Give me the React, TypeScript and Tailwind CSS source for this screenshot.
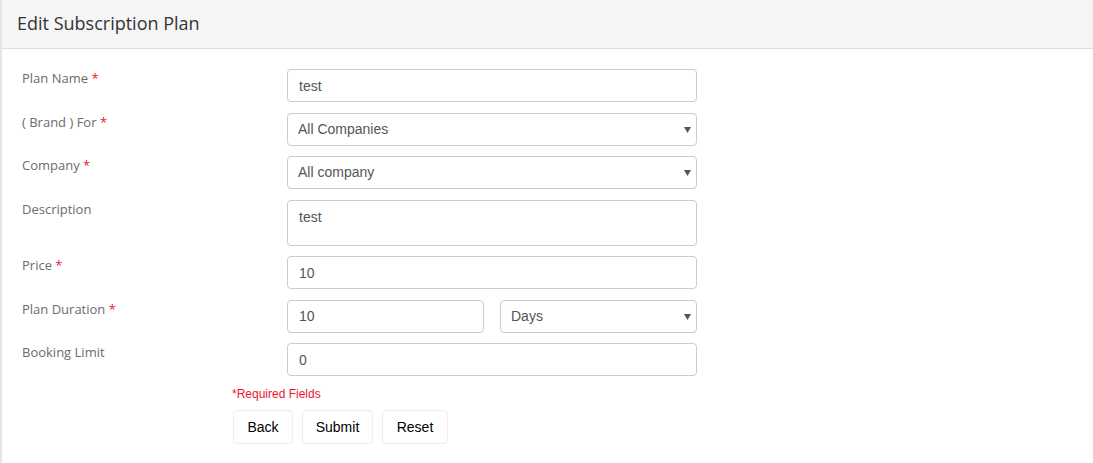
import React from "react";

const labelFont = { fontFamily: '"Open Sans", "Noto Sans", sans-serif' };

const Label = ({ text, required }: { text: string; required?: boolean }) => (
  <div className="text-[13px] leading-[18px] text-[#6b6b6b]" style={labelFont}>
    {text}
    {required && <span className="text-[#f0142f]"> *</span>}
  </div>
);

const inputCls =
  "w-full h-[33px] px-[11px] border border-[#ccc] rounded-[4px] bg-white text-[14px] text-[#555] outline-none font-['Liberation_Sans',Arial,sans-serif]";

const Select = ({ value, options }: { value: string; options: string[] }) => (
  <div className="relative w-full">
    <select defaultValue={value} className={inputCls + " appearance-none pl-[10px]"}>
      {options.map((o) => (
        <option key={o}>{o}</option>
      ))}
    </select>
    <svg
      className="absolute right-[6px] top-[14px] pointer-events-none"
      width="7"
      height="6"
      viewBox="0 0 7 6"
    >
      <path d="M0 0 H7 L3.5 6 Z" fill="#555" />
    </svg>
  </div>
);

export default function App() {
  return (
    <div className="w-[1093px] h-[463px] bg-white border-l-2 border-[#e6e6e6]">
      <div className="h-[49px] bg-[#f5f5f5] border-b border-[#ddd] flex items-center px-[15px]">
        <h1 className="text-[18px] text-[#333] pb-[2px]" style={labelFont}>
          Edit Subscription Plan
        </h1>
      </div>

      <form className="pt-[20px] pl-[20px]">
        <div className="grid grid-cols-[265px_410px] gap-y-[10.5px]">
          <Label text="Plan Name" required />
          <input className={inputCls} defaultValue="test" />

          <Label text="( Brand ) For" required />
          <Select value="All Companies" options={["All Companies", "Selected Companies"]} />

          <Label text="Company" required />
          <Select value="All company" options={["All company"]} />

          <Label text="Description" />
          <textarea
            className={inputCls + " h-[46px] pt-[6px] resize-none leading-[20px]"}
            defaultValue="test"
          />

          <Label text="Price" required />
          <input className={inputCls} defaultValue="10" />

          <Label text="Plan Duration" required />
          <div className="grid grid-cols-2 gap-[16px]">
            <input className={inputCls} defaultValue="10" />
            <Select value="Days" options={["Days", "Months", "Years"]} />
          </div>

          <Label text="Booking Limit" />
          <input className={inputCls} defaultValue="0" />
        </div>

        <div className="pl-[210px] mt-[9px] text-[12px] text-[#f0142f] font-['Liberation_Sans',Arial,sans-serif]">
          *Required Fields
        </div>

        <div className="pl-[211px] mt-[7px] flex gap-[9px] font-['Liberation_Sans',Arial,sans-serif]">
          <button type="button" className="h-[34px] w-[60px] border border-[#eee] rounded-[4px] bg-white text-[14px] text-black">
            Back
          </button>
          <button type="button" className="h-[34px] w-[71px] border border-[#eee] rounded-[4px] bg-white text-[14px] text-black">
            Submit
          </button>
          <button type="button" className="h-[34px] w-[66px] border border-[#eee] rounded-[4px] bg-white text-[14px] text-black">
            Reset
          </button>
        </div>
      </form>
    </div>
  );
}
